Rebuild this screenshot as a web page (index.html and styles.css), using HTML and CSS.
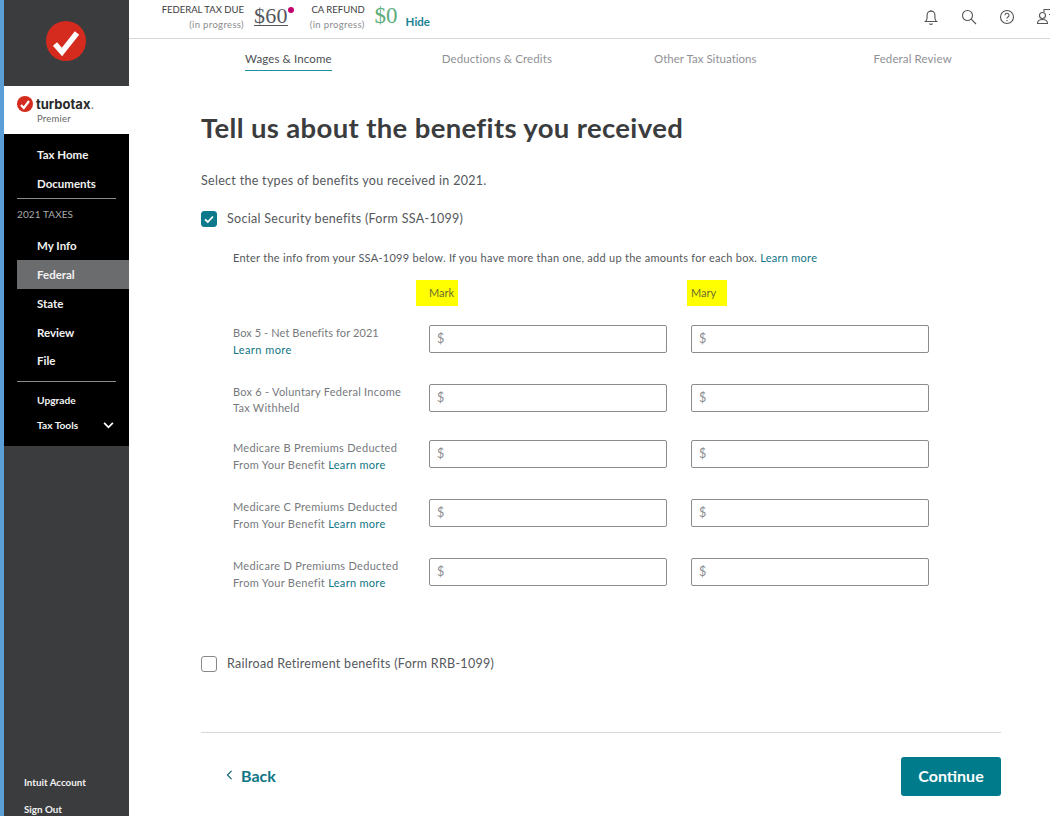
FILE: index.html
```html
<!DOCTYPE html>
<html lang="en">
<head>
<meta charset="utf-8">
<title>TurboTax</title>
<link rel="stylesheet" href="styles.css">
</head>
<body>
<div class="app">
  <aside class="sidebar">
    <div class="side-top">
      <svg class="logo-big" viewBox="0 0 40 40" width="40" height="40"><circle cx="20" cy="20" r="20" fill="#d52b1e"/><path d="M9 23l7 8L31 12" fill="none" stroke="#fff" stroke-width="5.500"/></svg>
    </div>
    <div class="brand">
      <div class="brand-row">
        <svg viewBox="0 0 16 16" width="16" height="16"><circle cx="8" cy="8" r="8" fill="#d52b1e"/><path d="M4 9l2.800 3L12 5" fill="none" stroke="#fff" stroke-width="2.200"/></svg>
        <span class="brand-name">turbotax<span class="brand-dot">.</span></span>
      </div>
      <div class="brand-sub">Premier</div>
    </div>
    <nav class="side-nav">
      <a class="nav-item">Tax Home</a>
      <a class="nav-item">Documents</a>
      <div class="nav-rule"></div>
      <div class="nav-head">2021 TAXES</div>
      <a class="nav-item">My Info</a>
      <a class="nav-item active">Federal</a>
      <a class="nav-item">State</a>
      <a class="nav-item">Review</a>
      <a class="nav-item last">File</a>
      <div class="nav-rule second"></div>
      <a class="nav-item small">Upgrade</a>
      <a class="nav-item small tools">Tax Tools
        <svg viewBox="0 0 12 8" width="11" height="7"><path d="M1 1l5 5 5-5" fill="none" stroke="#fff" stroke-width="2"/></svg>
      </a>
    </nav>
    <div class="side-foot">
      <a>Intuit Account</a>
      <a>Sign Out</a>
    </div>
  </aside>
  <main class="main">
    <header class="topbar">
      <div class="tax-label">FEDERAL TAX DUE<small>(in progress)</small></div>
      <div class="tax-due">$60<i class="dot"></i></div>
      <div class="tax-label ca">CA REFUND<small>(in progress)</small></div>
      <div class="tax-refund">$0</div>
      <a class="hide">Hide</a>
      <div class="top-icons">
        <svg viewBox="0 0 18 18" width="18" height="18"><path d="M3.500 13.500c1.300-1 1.600-2 1.600-4V7a3.900 3.900 0 0 1 7.800 0v2.500c0 2 .3 3 1.600 4zM7.500 15.500a1.700 1.700 0 0 0 3 0M9 2v1" fill="none" stroke="#555" stroke-width="1.100"/></svg>
        <svg viewBox="0 0 18 18" width="18" height="18"><circle cx="7.500" cy="7.500" r="5" fill="none" stroke="#555" stroke-width="1.100"/><path d="M11.200 11.200l4.800 4.800" stroke="#555" stroke-width="1.100"/></svg>
        <svg viewBox="0 0 18 18" width="18" height="18"><circle cx="9" cy="9" r="6.500" fill="none" stroke="#555" stroke-width="1.100"/><path d="M7 7.300a2 2 0 1 1 3 1.700c-.7.400-1 .8-1 1.500M9 12v1.200" fill="none" stroke="#555" stroke-width="1.100"/></svg>
        <svg class="chat" viewBox="0 0 18 18" width="18" height="18"><circle cx="6.500" cy="7.500" r="3" fill="none" stroke="#555" stroke-width="1.100"/><path d="M1.500 15.500c0-3 2-4 5-4s5 1 5 4zM8 4V1.500h8v5h-3" fill="none" stroke="#555" stroke-width="1.100"/></svg>
      </div>
    </header>
    <div class="tabs">
      <a class="tab current">Wages &amp; Income</a>
      <a class="tab t2">Deductions &amp; Credits</a>
      <a class="tab t3">Other Tax Situations</a>
      <a class="tab t4">Federal Review</a>
    </div>
    <section class="content">
      <h1>Tell us about the benefits you received</h1>
      <p class="lead">Select the types of benefits you received in 2021.</p>
      <label class="check-row">
        <span class="check on"><svg viewBox="0 0 16 16" width="16" height="16"><path d="M4 8.300l2.800 2.700L12 5.500" fill="none" stroke="#fff" stroke-width="1.800"/></svg></span>
        Social Security benefits (Form SSA-1099)
      </label>
      <div class="details">
        <p class="intro">Enter the info from your SSA-1099 below. If you have more than one, add up the amounts for each box. <a class="link">Learn more</a></p>
        <div class="names">
          <span class="name mark">Mark</span>
          <span class="name mary">Mary</span>
        </div>
        <div class="row r1">
          <div class="label">Box 5 - Net Benefits for 2021<br><a class="link">Learn more</a></div>
          <div class="field">$</div><div class="field">$</div>
        </div>
        <div class="row r2">
          <div class="label">Box 6 - Voluntary Federal Income<br>Tax Withheld</div>
          <div class="field">$</div><div class="field">$</div>
        </div>
        <div class="row r3">
          <div class="label">Medicare B Premiums Deducted<br>From Your Benefit <a class="link">Learn more</a></div>
          <div class="field">$</div><div class="field">$</div>
        </div>
        <div class="row r4">
          <div class="label">Medicare C Premiums Deducted<br>From Your Benefit <a class="link">Learn more</a></div>
          <div class="field">$</div><div class="field">$</div>
        </div>
        <div class="row r4">
          <div class="label">Medicare D Premiums Deducted<br>From Your Benefit <a class="link">Learn more</a></div>
          <div class="field">$</div><div class="field">$</div>
        </div>
      </div>
      <label class="check-row rail">
        <span class="check"></span>
        Railroad Retirement benefits (Form RRB-1099)
      </label>
      <div class="actions">
        <a class="back"><svg viewBox="0 0 8 12" width="7" height="10"><path d="M6.500 1L1.500 6l5 5" fill="none" stroke="#055f6f" stroke-width="1.300"/></svg>Back</a>
        <a class="continue">Continue</a>
      </div>
    </section>
  </main>
</div>
</body>
</html>
```
FILE: styles.css
```css
* { box-sizing: border-box; }
html, body { margin: 0; height: 100%; }
body {
  font-family: "Lato", "Liberation Sans", sans-serif;
  color: #555;
  background: #fff;
  overflow: hidden;
}
.app { display: flex; height: 816px; border-left: 4px solid #5b9fd6; }

/* Sidebar */
.sidebar {
  width: 125px;
  flex: none;
  background: #3b3c3e;
  display: flex;
  flex-direction: column;
  color: #fff;
}
.side-top { height: 86px; display: flex; align-items: center; justify-content: center; padding-right: 1px; padding-bottom: 4px; }
.brand { height: 48px; background: #fff; padding: 10px 0 0 13px; }
.brand-row { display: flex; align-items: center; gap: 3px; height: 16px; }
.brand-name { font-family: "Inter", "Liberation Sans", sans-serif; font-size: 13px; font-weight: 700; color: #2a2a2a; }
.brand-dot { font-weight: 400; color: #888; }
.brand-sub { font-size: 9.500px; color: #666; margin-left: 20px; line-height: 13px; letter-spacing: .2px; }
.side-nav { background: #000; height: 312px; padding-top: 6px; }
.nav-item {
  display: block;
  height: 29px;
  line-height: 29px;
  margin-left: 13px;
  padding-left: 20px;
  font-size: 11.500px;
  font-weight: 700;
  color: #f2f2f2;
}
.nav-item.active { background: #6b6c6e; }
.nav-item.last { height: 28px; line-height: 27px; }
.nav-item.small { font-size: 10.200px; height: 25px; line-height: 25px; }
.nav-rule { height: 1px; background: #8a8a8a; margin: 0 13px; }
.nav-rule.second { margin-top: 6px; margin-bottom: 6px; }
.nav-head { font-size: 10px; color: #aaa; margin: 9px 0 11px 13px; line-height: 12px; letter-spacing: .1px; }
.tools { display: flex; align-items: center; justify-content: space-between; padding-right: 15px; }
.side-foot { margin-top: auto; padding-left: 20px; display: flex; flex-direction: column; gap: 14px; font-size: 9.800px; font-weight: 700; line-height: 13px; color: #f2f2f2; }

/* Top bar */
.main { flex: 1; min-width: 0; display: flex; flex-direction: column; }
.topbar {
  height: 39px;
  border-bottom: 1px solid #d4d7dc;
  display: flex;
  align-items: flex-start;
  padding-left: 32px;
  position: relative;
  flex: none;
}
.tax-label { font-size: 9.500px; color: #3b3c3e; text-align: right; line-height: 11px; padding-top: 4px; width: 83px; white-space: nowrap; }
.tax-label small { display: block; font-size: 9.500px; color: #8a8c90; margin-top: 4px; letter-spacing: .35px; }
.tax-label.ca { width: 60px; margin-left: 17px; }
.tax-due {
  font-family: "Liberation Serif", serif;
  font-size: 22px;
  color: #55585c;
  margin-left: 10px;
  height: 26px;
  line-height: 31px;
  border-bottom: 1px solid #55585c;
  position: relative;
  letter-spacing: .2px;
}
.dot { position: absolute; right: -6px; top: 7px; width: 6px; height: 6px; border-radius: 50%; background: #c4006e; }
.tax-refund { font-family: "Liberation Serif", serif; font-size: 23px; color: #5cae7c; margin-left: 10px; line-height: 31px; }
.hide { font-size: 11.500px; font-weight: 700; color: #1c8392; margin-left: 8px; padding-top: 15px; line-height: 14px; }
.top-icons { position: absolute; top: 8px; left: 793px; display: flex; gap: 20px; }
.top-icons svg { display: block; flex: none; }

/* Tabs */
.tabs { height: 33px; display: flex; font-size: 11.500px; letter-spacing: .12px; flex: none; color: #8f9195; padding-left: 116px; padding-top: 12px; }
.tab { line-height: 15px; height: 20px; white-space: nowrap; }
.tab.current { color: #4d4f52; border-bottom: 1px solid #1f8fa0; }
.t2 { margin-left: 110px; }
.t3 { margin-left: 102px; letter-spacing: .02px; }
.t4 { margin-left: 117px; }

/* Content */
.content { padding-left: 72px; flex: 1; width: 872px; box-sizing: content-box; }
h1 { font-size: 27.500px; font-weight: 700; color: #3b3c3e; margin: 39px 0 0; line-height: 34px; letter-spacing: .35px; }
.lead { font-size: 12.500px; margin: 28px 0 0; line-height: 16px; color: #55585c; letter-spacing: .3px; }
.check-row { display: flex; align-items: center; gap: 10px; font-size: 12.500px; color: #55585c; letter-spacing: .3px; line-height: 16px; margin-top: 22px; }
.check { width: 16px; height: 16px; border-radius: 3px; border: 1px solid #888; display: block; flex: none; background: #fff; }
.check.on { background: #0d7a8c; border-color: #0d7a8c; }
.check.on svg { display: block; margin: -1px; }
.details { padding-left: 32px; }
.intro { font-size: 11px; margin: 23px 0 0; line-height: 16px; color: #55585c; letter-spacing: .27px; white-space: nowrap; }
.link { color: #0f7585; }
.names { display: flex; margin-top: 14px; padding-left: 183px; height: 26px; }
.name { background: #ffff00; font-size: 11px; color: #6d6d30; height: 26px; line-height: 26px; display: block; }
.mark { width: 42px; padding-left: 13px; }
.mary { width: 40px; padding-left: 4px; margin-left: 229px; }
.row { display: flex; align-items: flex-start; }
.label { width: 196px; font-size: 11px; line-height: 17px; color: #77797d; letter-spacing: .3px; white-space: nowrap; margin-top: -1px; }
.field {
  width: 238px;
  height: 28px;
  border: 1px solid #8a8c90;
  border-radius: 2px;
  font-size: 12.500px;
  color: #8a8c90;
  padding-left: 7px;
  line-height: 26px;
  margin-right: 24px;
}
.r1 { margin-top: 19px; }
.r1 .label { letter-spacing: .1px; }
.r1 .link { letter-spacing: .45px; }
.r2 { margin-top: 26px; }
.r2 .label { line-height: 16px; letter-spacing: .25px; margin-top: 0; }
.r3 { margin-top: 24px; }
.r4 { margin-top: 26px; }
.rail { margin-top: 65px; letter-spacing: .28px; }
.actions { margin-top: 60px; border-top: 1px solid #d4d7dc; display: flex; align-items: flex-start; justify-content: space-between; padding-top: 24px; width: 800px; }
.back { display: flex; align-items: center; gap: 8px; padding-left: 25px; padding-bottom: 3px; height: 39px; font-size: 16px; font-weight: 700; color: #0f7585; }
.continue {
  width: 100px; height: 39px; border-radius: 3px;
  background: #007b8c; color: #fff;
  display: flex; align-items: center; justify-content: center;
  padding-bottom: 2px;
  font-size: 16px; font-weight: 700;
}
```
